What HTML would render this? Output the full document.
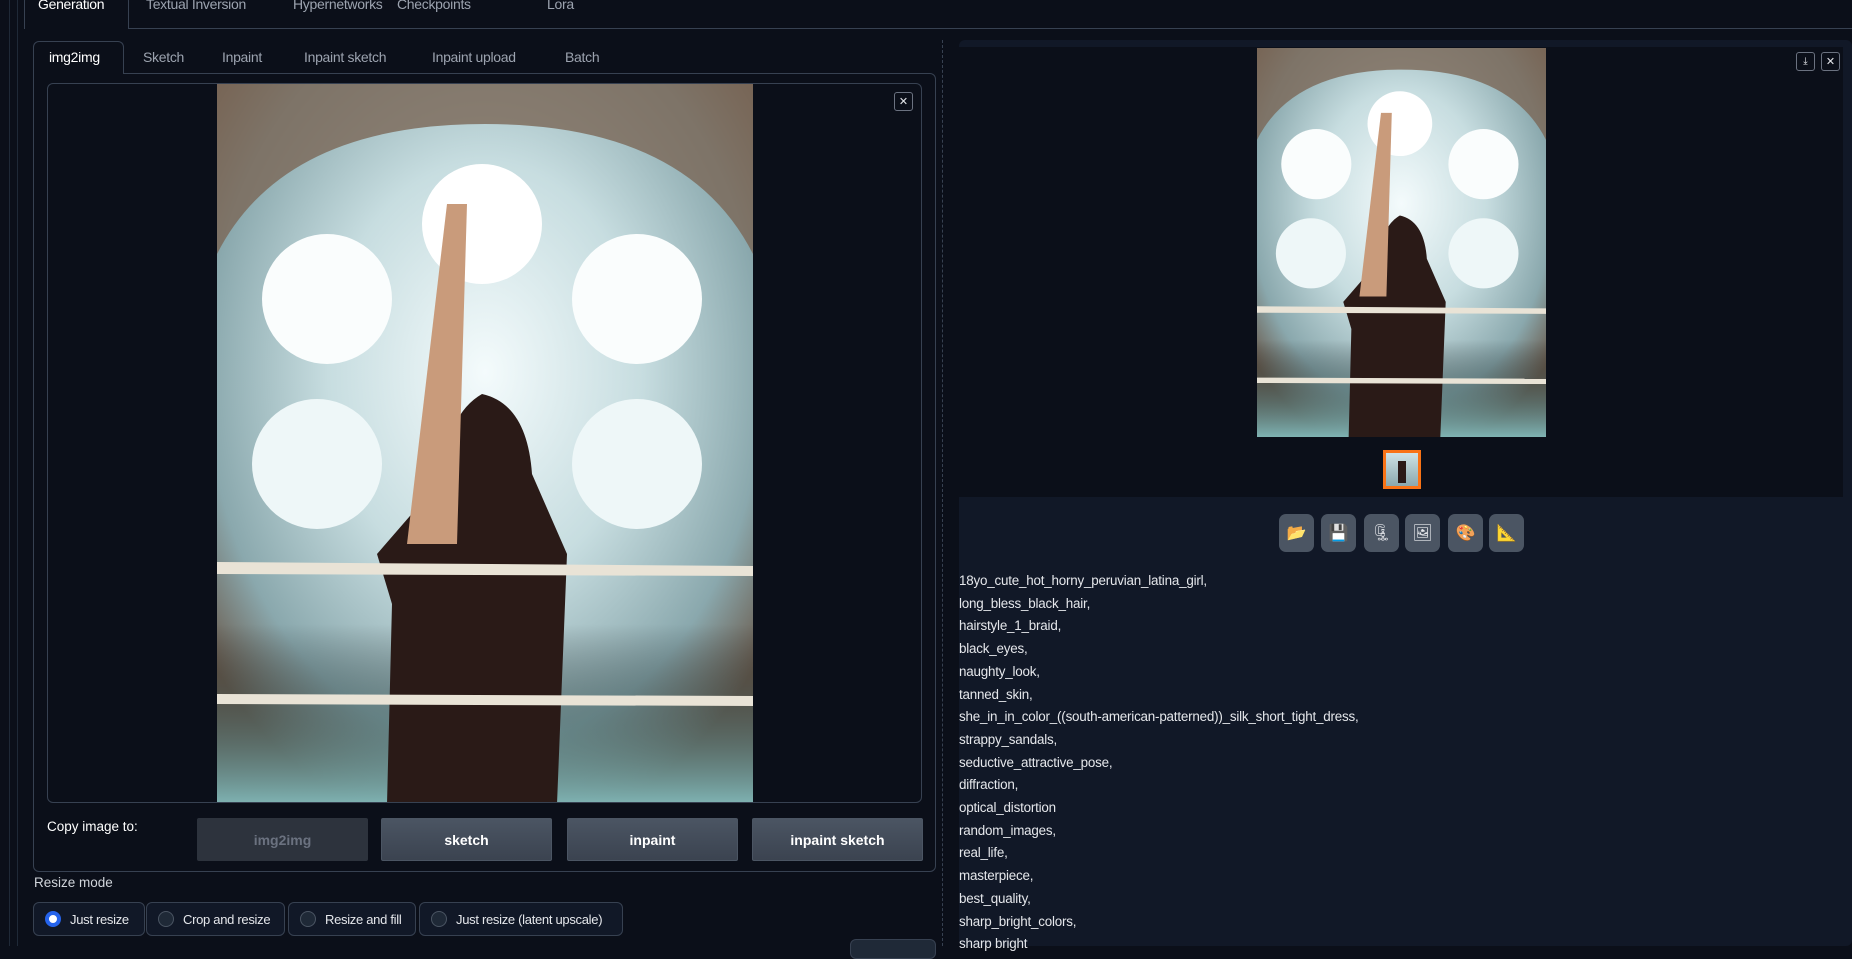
<!DOCTYPE html>
<html><head><meta charset="utf-8"><style>
*{box-sizing:border-box;margin:0;padding:0}
body{width:1852px;height:946px;overflow:hidden;background:#0b0f19;font-family:"Liberation Sans",sans-serif;color:#e5e7eb;position:relative}
.a{position:absolute}
.tab{position:absolute;font-size:14px;letter-spacing:-0.3px;color:#9ca3af;white-space:nowrap}
.btn{position:absolute;top:818px;height:43px;border:1px solid #4b5563;background:linear-gradient(#4b5563,#3b4350);border-radius:2px;color:#fff;font-weight:bold;font-size:14px;display:flex;align-items:center;justify-content:center}
.radio{position:absolute;top:902px;height:34px;border:1px solid #374151;background:#111827;border-radius:6px;font-size:13px;letter-spacing:-0.3px;white-space:nowrap;color:#e5e7eb;display:flex;align-items:center;padding-left:11px}
.radio i{width:16px;height:16px;border-radius:50%;border:1px solid #4b5563;background:#1f2937;margin-right:9px;display:inline-block;flex:none}
.tool{position:absolute;top:514px;width:35px;height:38px;border-radius:7px;background:#4b5563;display:flex;align-items:center;justify-content:center;font-size:16px}
.txt{position:absolute;left:959px;top:570px;font-size:13.4px;letter-spacing:-0.2px;line-height:22.7px;color:#e5e7eb;white-space:nowrap}
.ib{position:absolute;width:19px;height:19px;border:1px solid #6b7280;border-radius:3px;color:#e5e7eb;font-size:11px;display:flex;align-items:center;justify-content:center;background:#0b0f19}
</style></head><body>
<div class="a" style="left:9px;top:0;width:1px;height:946px;background:#1f2937"></div>
<div class="a" style="left:17px;top:0;width:1px;height:946px;background:#1f2937"></div>
<div class="a" style="left:128px;top:28px;width:1724px;height:1px;background:#374151"></div>
<div class="a" style="left:24px;top:-5px;width:105px;height:34px;border:1px solid #374151;border-bottom:none;border-radius:6px 6px 0 0;background:#0b0f19"></div>
<div class="tab" style="left:38px;top:-4px;color:#fff">Generation</div>
<div class="tab" style="left:146px;top:-4px">Textual Inversion</div>
<div class="tab" style="left:293px;top:-4px">Hypernetworks</div>
<div class="tab" style="left:397px;top:-4px">Checkpoints</div>
<div class="tab" style="left:547px;top:-4px">Lora</div>
<div class="a" style="left:33px;top:73px;width:903px;height:799px;border:1px solid #374151;border-radius:0 6px 6px 6px"></div>
<div class="a" style="left:33px;top:41px;width:91px;height:33px;border:1px solid #374151;border-bottom:none;border-radius:6px 6px 0 0;background:#0b0f19"></div>
<div class="tab" style="left:49px;top:49px;color:#fff">img2img</div>
<div class="tab" style="left:143px;top:49px">Sketch</div>
<div class="tab" style="left:222px;top:49px">Inpaint</div>
<div class="tab" style="left:304px;top:49px">Inpaint sketch</div>
<div class="tab" style="left:432px;top:49px">Inpaint upload</div>
<div class="tab" style="left:565px;top:49px">Batch</div>
<div class="a" style="left:942px;top:40px;width:0;height:906px;border-left:1px dashed #374151"></div>
<div class="a" style="left:47px;top:83px;width:875px;height:720px;border:1px solid #374151;border-radius:6px;overflow:hidden;background:#0b0f19">
<svg class="a" style="left:169px;top:0" width="536" height="720" viewBox="0 0 536 720">
<defs><radialGradient id="g" cx="50%" cy="40%" r="65%"><stop offset="0" stop-color="#f4fbfc"/><stop offset=".45" stop-color="#c7dde0"/><stop offset=".8" stop-color="#8aa8ad"/><stop offset="1" stop-color="#6a5a4c"/></radialGradient>
<linearGradient id="b" x1="0" y1="0" x2="0" y2="1"><stop offset=".75" stop-color="#0000"/><stop offset="1" stop-color="#7fb3b3"/></linearGradient></defs>
<rect width="536" height="720" fill="url(#g)"/><rect width="536" height="720" fill="url(#b)"/>
<path d="M0 0H536V170Q470 40 268 40Q66 40 0 170Z" fill="#7a6656" opacity=".8"/>
<circle cx="110" cy="215" r="65" fill="#fafdfd"/><circle cx="420" cy="215" r="65" fill="#fafdfd"/><circle cx="100" cy="380" r="65" fill="#eef7f8"/><circle cx="420" cy="380" r="65" fill="#eef7f8"/><circle cx="265" cy="140" r="60" fill="#fff"/>
<path d="M225 395Q230 330 265 310Q310 320 315 390L350 470L340 720H170L175 520L160 470Z" fill="#2a1a17"/>
<path d="M190 460L230 120L250 120L240 460Z" fill="#c99b7b"/>
<path d="M0 478L536 482V492L0 490Z" fill="#e9e3d6"/><path d="M0 610L536 612V622L0 620Z" fill="#e9e3d6"/>
</svg>
</div>
<div class="ib" style="left:894px;top:92px">✕</div>
<div class="a" style="left:47px;top:819px;font-size:13.5px;color:#fff">Copy image to:</div>
<div class="btn" style="left:197px;width:171px;background:#2d333d;border-color:#2d333d;color:#6b7280">img2img</div>
<div class="btn" style="left:381px;width:171px">sketch</div>
<div class="btn" style="left:567px;width:171px">inpaint</div>
<div class="btn" style="left:752px;width:171px">inpaint sketch</div>
<div class="a" style="left:34px;top:875px;font-size:13.5px;color:#d1d5db">Resize mode</div>
<div class="radio" style="left:33px;width:112px"><i style="background:#fff;border:4px solid #2563eb"></i>Just resize</div>
<div class="radio" style="left:146px;width:139px"><i></i>Crop and resize</div>
<div class="radio" style="left:288px;width:128px"><i></i>Resize and fill</div>
<div class="radio" style="left:419px;width:204px"><i></i>Just resize (latent upscale)</div>
<div class="a" style="left:850px;top:939px;width:86px;height:20px;border-radius:6px;background:#1f2937;border:1px solid #374151"></div>
<div class="a" style="left:959px;top:40px;width:893px;height:906px;background:#111827;border-radius:6px"></div>
<div class="a" style="left:959px;top:47px;width:884px;height:450px;background:#0b0f19"></div>
<svg class="a" style="left:1257px;top:48px" width="289" height="389" viewBox="0 0 536 720" preserveAspectRatio="none">
<rect width="536" height="720" fill="url(#g)"/><rect width="536" height="720" fill="url(#b)"/>
<path d="M0 0H536V170Q470 40 268 40Q66 40 0 170Z" fill="#7a6656" opacity=".8"/>
<circle cx="110" cy="215" r="65" fill="#fafdfd"/><circle cx="420" cy="215" r="65" fill="#fafdfd"/><circle cx="100" cy="380" r="65" fill="#eef7f8"/><circle cx="420" cy="380" r="65" fill="#eef7f8"/><circle cx="265" cy="140" r="60" fill="#fff"/>
<path d="M225 395Q230 330 265 310Q310 320 315 390L350 470L340 720H170L175 520L160 470Z" fill="#2a1a17"/>
<path d="M190 460L230 120L250 120L240 460Z" fill="#c99b7b"/>
<path d="M0 478L536 482V492L0 490Z" fill="#e9e3d6"/><path d="M0 610L536 612V622L0 620Z" fill="#e9e3d6"/>
</svg>
<div class="a" style="left:1383px;top:450px;width:38px;height:39px;border:3px solid #f97316;background:linear-gradient(#cfe3e6,#8aa8ad)"><div style="margin:8px auto;width:8px;height:22px;background:#2a1a17"></div></div>
<div class="ib" style="left:1796px;top:52px;font-size:10px">⤓</div>
<div class="ib" style="left:1821px;top:52px">✕</div>
<div class="tool" style="left:1279px">📂</div>
<div class="tool" style="left:1321px">💾</div>
<div class="tool" style="left:1364px">🗜</div>
<div class="tool" style="left:1405px">🖼</div>
<div class="tool" style="left:1448px">🎨</div>
<div class="tool" style="left:1489px">📐</div>
<div class="txt">18yo_cute_hot_horny_peruvian_latina_girl,<br>long_bless_black_hair,<br>hairstyle_1_braid,<br>black_eyes,<br>naughty_look,<br>tanned_skin,<br>she_in_in_color_((south-american-patterned))_silk_short_tight_dress,<br>strappy_sandals,<br>seductive_attractive_pose,<br>diffraction,<br>optical_distortion<br>random_images,<br>real_life,<br>masterpiece,<br>best_quality,<br>sharp_bright_colors,<br>sharp bright</div>
</body></html>
